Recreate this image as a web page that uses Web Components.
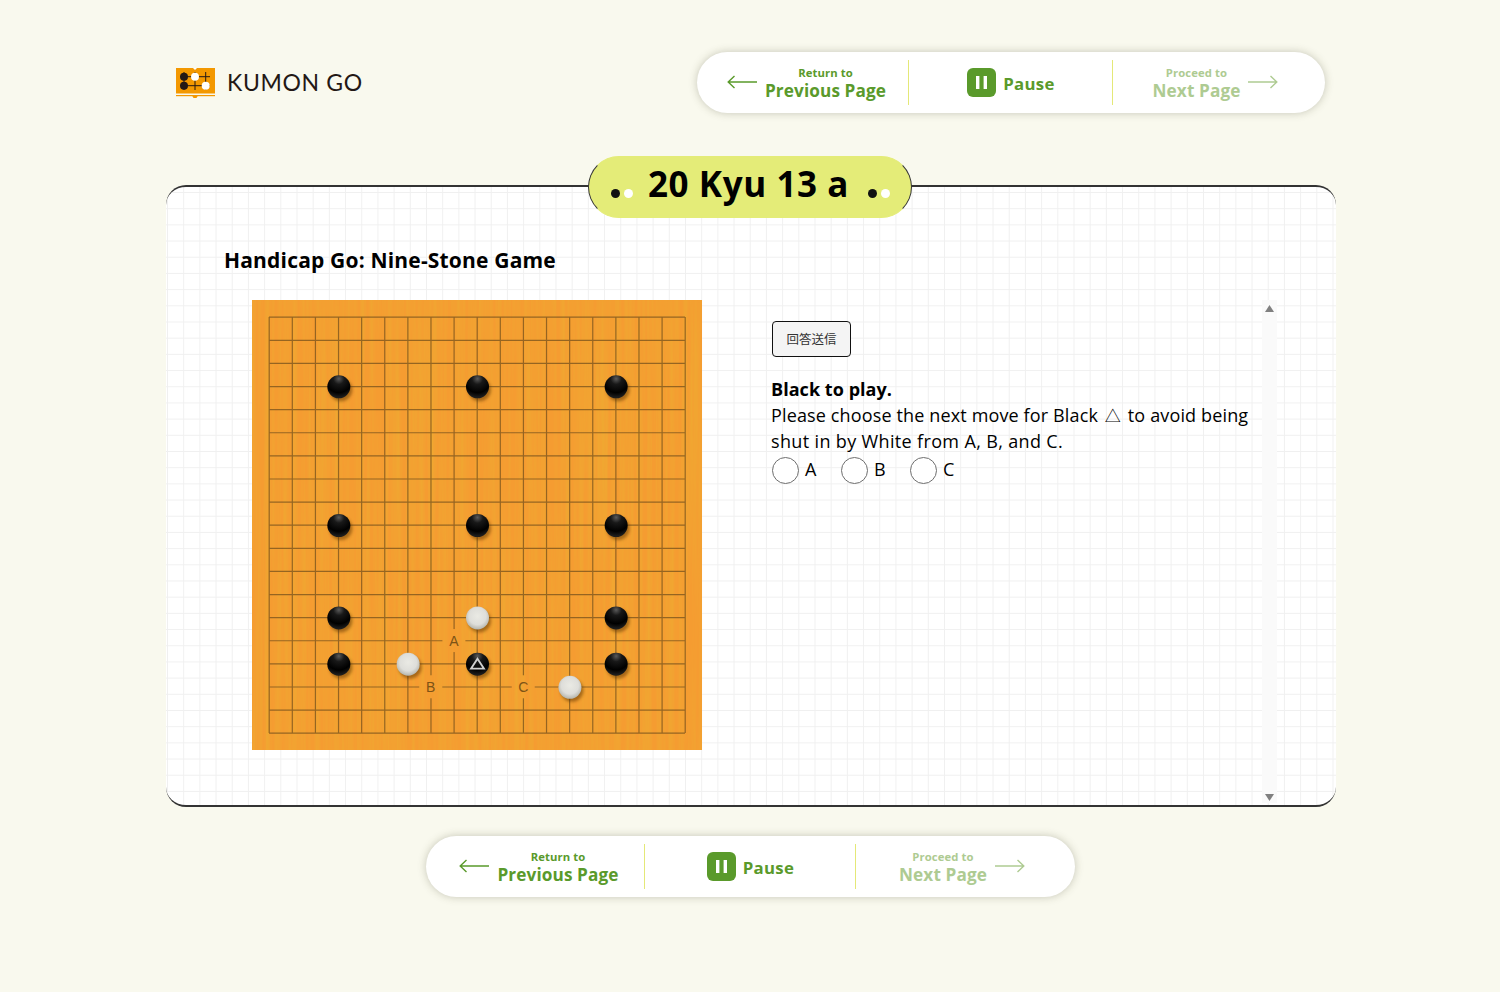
<!DOCTYPE html>
<html lang="en">
<head>
<meta charset="utf-8">
<title>KUMON GO</title>
<style>
    html, body { margin: 0; padding: 0; }
    body {
        background: #f9f9ee;
        font-family: "Open Sans", "Noto Sans CJK JP", sans-serif;
        color: #000;
    }
</style>
</head>
<body>
<kumon-page></kumon-page>

<script>
(function() {
    // nav-item: one section of the pill
    const navItemTpl = document.createElement('template');
    navItemTpl.innerHTML = `
        <style>
            :host {
                display: flex;
                align-items: center;
                justify-content: center;
                box-sizing: border-box;
                height: 100%;
                color: #5a9a2b;
                font-weight: 700;
            }
            :host([disabled]) { color: #aecb92; }
            :host([kind=prev]) { padding-left: 8px; }
            :host([kind=next]) { padding-right: 7px; }
            :host([kind=pause]) { padding-left: 1px; }
            .wrap { display: flex; align-items: center; gap: 8px; }
            :host([kind=pause]) .wrap { gap: 7px; }
            .labels { display: flex; flex-direction: column; align-items: center; margin-top: -1px; }
            .small { font-size: 11.300px; line-height: 14px; letter-spacing: .1px; margin-bottom: 1px; }
            .big { font-size: 17.200px; line-height: 20px; letter-spacing: .1px; margin-bottom: -2px; }
            svg { display: block; }
            .arrow { margin-top: -2px; }
            .pause { font-size: 16.800px; letter-spacing: .3px; margin-top: 2px; }
        </style>
        <div class="wrap"></div>
    `;
    const arrowLeft = `<svg class="arrow" width="30" height="14" viewBox="0 0 30 14" fill="none" stroke="currentColor" stroke-width="1.400"><path d="M30 7H1.500M7.500 1L1.200 7l6.300 6"/></svg>`;
    const arrowRight = `<svg class="arrow" width="30" height="14" viewBox="0 0 30 14" fill="none" stroke="currentColor" stroke-width="1.400"><path d="M0 7h28.500M22.500 1l6.300 6-6.300 6"/></svg>`;
    const pauseIcon = `<svg width="29" height="29" viewBox="0 0 29 29"><rect width="29" height="29" rx="6" fill="currentColor"/><rect x="9" y="8" width="3.400" height="13" fill="#fff"/><rect x="16.600" y="8" width="3.400" height="13" fill="#fff"/></svg>`;

    class NavItem extends HTMLElement {
        constructor() {
            super();
            this.attachShadow({mode: 'open'});
            this.shadowRoot.appendChild(navItemTpl.content.cloneNode(true));
        }

        connectedCallback() {
            const kind = this.getAttribute('kind');
            const wrap = this.shadowRoot.querySelector('.wrap');
            const labels = `<div class="labels"><span class="small">${this.getAttribute('small')}</span><span class="big">${this.getAttribute('big')}</span></div>`;
            if (kind === 'prev') {
                wrap.innerHTML = arrowLeft + labels;
            } else if (kind === 'next') {
                wrap.innerHTML = labels + arrowRight;
            } else {
                wrap.innerHTML = pauseIcon + '<span class="pause">Pause</span>';
            }
        }
    }
    customElements.define('nav-item', NavItem);

    // nav-pill: white rounded bar, column widths come from custom properties
    const navPillTpl = document.createElement('template');
    navPillTpl.innerHTML = `
        <style>
            :host {
                display: block;
                width: var(--pill-width);
                height: 61px;
                background: #fff;
                border-radius: 31px;
                box-shadow: 0 0 8px rgba(70, 70, 40, .28);
            }
            .row {
                display: grid;
                grid-template-columns: var(--c1) 1px var(--c2) 1px 1fr;
                align-items: center;
                height: 100%;
            }
            .sep { width: 1px; height: 45px; background: #e4e878; }
        </style>
        <div class="row">
            <slot name="prev"></slot>
            <div class="sep"></div>
            <slot name="pause"></slot>
            <div class="sep"></div>
            <slot name="next"></slot>
        </div>
    `;
    class NavPill extends HTMLElement {
        constructor() {
            super();
            this.attachShadow({mode: 'open'});
            this.shadowRoot.appendChild(navPillTpl.content.cloneNode(true));
        }
    }
    customElements.define('nav-pill', NavPill);

    // kumon-logo
    const logoTpl = document.createElement('template');
    logoTpl.innerHTML = `
        <style>
            :host { display: flex; align-items: center; gap: 12px; }
            span {
                font-family: "Lato", "Liberation Sans", sans-serif;
                font-size: 23px;
                font-weight: 400;
                letter-spacing: .65px;
                line-height: 30px;
                margin-top: -2px;
                color: #231815;
            }
            svg { display: block; }
        </style>
        <svg width="39" height="31" viewBox="0 0 39 31">
            <rect x="0" y="1" width="39" height="25.500" fill="#f39800"/>
            <path d="M17 1h4l-2 2z" fill="#fff"/>
            <rect x="0" y="28" width="39" height="1.200" fill="#f39800"/>
            <path d="M16 28.500h6l-1.500 2.500h-3z" fill="#f39800"/>
            <path d="M4 9.700h30M4 18.700h30M8 5v18M19 5v18M29.700 5v18" stroke="#231815" stroke-width="1" fill="none"/>
            <circle cx="8" cy="9.700" r="4" fill="#231815"/>
            <circle cx="8" cy="18.700" r="4" fill="#231815"/>
            <circle cx="19" cy="9.700" r="4" fill="#fff"/>
            <circle cx="29.700" cy="18.700" r="4" fill="#fff"/>
        </svg>
        <span>KUMON GO</span>
    `;
    class KumonLogo extends HTMLElement {
        constructor() {
            super();
            this.attachShadow({mode: 'open'});
            this.shadowRoot.appendChild(logoTpl.content.cloneNode(true));
        }
    }
    customElements.define('kumon-logo', KumonLogo);

    // level-badge: yellow pill that sits on the top border of the card
    const badgeTpl = document.createElement('template');
    badgeTpl.innerHTML = `
        <style>
            :host {
                display: flex;
                align-items: center;
                justify-content: space-between;
                box-sizing: border-box;
                width: 324px;
                height: 62px;
                padding: 0 21px 0 22px;
                background: #e4ec78;
                border: 1.500px solid #333;
                border-top-color: #e4ec78;
                border-bottom-color: #e4ec78;
                border-radius: 31px;
            }
            .title {
                font-size: 35px;
                font-weight: 700;
                line-height: 48px;
                margin: -6px 4px 0 0;
                letter-spacing: .6px;
                color: #000;
            }
            .dots { display: flex; gap: 4px; margin-top: 12px; }
            .dots i { display: block; width: 9px; height: 9px; border-radius: 50%; background: #111; }
            .dots i + i { background: #fff; }
        </style>
        <div class="dots"><i></i><i></i></div>
        <div class="title"><slot></slot></div>
        <div class="dots"><i></i><i></i></div>
    `;
    class LevelBadge extends HTMLElement {
        constructor() {
            super();
            this.attachShadow({mode: 'open'});
            this.shadowRoot.appendChild(badgeTpl.content.cloneNode(true));
        }
    }
    customElements.define('level-badge', LevelBadge);

    // go-board: draws the grid and stones in one svg
    const STEP = 416 / 18;
    const ORIGIN = 17;
    const at = n => ORIGIN + n * STEP;

    class GoBoard extends HTMLElement {
        constructor() {
            super();
            this.attachShadow({mode: 'open'});
        }

        get stones() { return JSON.parse(this.getAttribute('stones')); }
        get labels() { return JSON.parse(this.getAttribute('labels')); }

        connectedCallback() {
            let grid = '';
            for (let i = 0; i < 19; i++) {
                const p = at(i) + .2;
                grid += `M${p} ${ORIGIN}V${ORIGIN + 416}M${ORIGIN} ${p}H${ORIGIN + 416}`;
            }
            // label cells knock a hole in the grid, the wood shows through
            const holes = this.labels.map(([t, c, r]) =>
                `<rect x="${at(c) - 11.500}" y="${at(r) - 11.500}" width="23" height="23" fill="#000"/>`).join('');
            const letters = this.labels.map(([t, c, r]) =>
                `<text x="${at(c)}" y="${at(r) + 5}" text-anchor="middle">${t}</text>`).join('');
            const stones = this.stones.map(([color, c, r, mark]) => {
                const x = at(c) + .5, y = at(r) + .5;
                let out = `<circle cx="${x + 2}" cy="${y + 3}" r="11.500" fill="#5a3000" opacity=".5" filter="url(#soft)"/>`;
                out += `<circle cx="${x}" cy="${y}" r="11.500" fill="url(#${color})"/>`;
                if (mark) {
                    out += `<path d="M${x} ${y - 5.500}L${x + 6.500} ${y + 4.500}H${x - 6.500}Z" fill="none" stroke="#d0d0d0" stroke-width="1.800"/>`;
                }
                return out;
            }).join('');

            this.shadowRoot.innerHTML = `
                <style>
                    :host { display: block; width: 450px; height: 450px; flex: none; }
                    svg { display: block; }
                    text { font-family: "Liberation Sans", sans-serif; font-size: 14px; fill: #7d5316; }
                </style>
                <svg width="450" height="450" viewBox="0 0 450 450">
                    <defs>
                        <filter id="wood" x="0" y="0" width="100%" height="100%">
                            <feTurbulence type="fractalNoise" baseFrequency="0.22 0.004" numOctaves="3" seed="4"/>
                            <feColorMatrix values="0 0 0 0 .85  0 0 0 0 .42  0 0 0 0 .03  1.200 0 0 0 -.38"/>
                        </filter>
                        <filter id="soft"><feGaussianBlur stdDeviation="1.500"/></filter>
                        <mask id="holes" maskUnits="userSpaceOnUse" x="0" y="0" width="450" height="450">
                            <rect width="450" height="450" fill="#fff"/>
                            ${holes}
                        </mask>
                        <radialGradient id="black" cx=".5" cy=".15" r=".8">
                            <stop offset="0" stop-color="#5a5a5a"/>
                            <stop offset=".3" stop-color="#181818"/>
                            <stop offset=".75" stop-color="#000"/>
                            <stop offset="1" stop-color="#1c1c1c"/>
                        </radialGradient>
                        <radialGradient id="white" cx=".5" cy=".42" r=".62">
                            <stop offset="0" stop-color="#eaeae4"/>
                            <stop offset=".6" stop-color="#dededa"/>
                            <stop offset="1" stop-color="#adada4"/>
                        </radialGradient>
                    </defs>
                    <rect width="450" height="450" fill="#f59c31"/>
                    <rect width="450" height="450" filter="url(#wood)"/>
                    <path d="${grid}" fill="none" stroke="#704e1c" stroke-opacity=".72" stroke-width="1.200" mask="url(#holes)"/>
                    ${letters}${stones}
                </svg>
            `;
        }
    }
    customElements.define('go-board', GoBoard);

    // scroll-track: fake scrollbar beside the question text
    const trackTpl = document.createElement('template');
    trackTpl.innerHTML = `
        <style>
            :host {
                display: flex;
                flex-direction: column;
                justify-content: space-between;
                align-items: center;
                box-sizing: border-box;
                width: 15px;
                padding: 5px 0 2px;
                background: #fafafa;
                flex: none;
            }
            svg { display: block; }
        </style>
        <svg width="9" height="7" viewBox="0 0 9 7"><path d="M4.500 0L9 7H0z" fill="#808080"/></svg>
        <svg width="9" height="7" viewBox="0 0 9 7"><path d="M0 0h9L4.500 7z" fill="#808080"/></svg>
    `;
    class ScrollTrack extends HTMLElement {
        constructor() {
            super();
            this.attachShadow({mode: 'open'});
            this.shadowRoot.appendChild(trackTpl.content.cloneNode(true));
        }
    }
    customElements.define('scroll-track', ScrollTrack);

    // answer-choice: round radio with a letter
    const choiceTpl = document.createElement('template');
    choiceTpl.innerHTML = `
        <style>
            :host { display: inline-flex; align-items: center; gap: 6px; width: 69px; }
            input {
                appearance: none;
                box-sizing: border-box;
                width: 27px;
                height: 27px;
                margin: 0;
                border: 1px solid #6e6e6e;
                border-radius: 50%;
                background: #fff;
            }
            span { font-size: 18px; line-height: 24px; margin-top: -4px; }
        </style>
        <input type="radio" name="answer"><span><slot></slot></span>
    `;
    class AnswerChoice extends HTMLElement {
        constructor() {
            super();
            this.attachShadow({mode: 'open'});
            this.shadowRoot.appendChild(choiceTpl.content.cloneNode(true));
        }
    }
    customElements.define('answer-choice', AnswerChoice);

    // question-panel: submit button, prompt and choices
    const panelTpl = document.createElement('template');
    panelTpl.innerHTML = `
        <style>
            :host {
                display: block;
                flex: 1;
                min-width: 0;
                padding-top: 21px;
                font-size: 18px;
                line-height: 26px;
                letter-spacing: .14px;
            }
            button {
                display: block;
                box-sizing: border-box;
                width: 79px;
                height: 36px;
                margin-left: 1px;
                padding: 0 0 2px;
                border: 1px solid #111;
                border-radius: 4px;
                background: #f4f4f4;
                color: #333;
                font-family: "Noto Sans CJK JP", sans-serif;
                font-size: 12.500px;
            }
            p { margin: 19px 0 0; }
            b { font-weight: 700; letter-spacing: .05px; }
            .tri { font-family: "Noto Sans CJK JP", sans-serif; font-size: 16px; line-height: 1; margin: 0 2px; }
            .second { letter-spacing: .35px; }
            .choices { display: flex; margin-top: 3px; padding-left: 1px; }
        </style>
        <button>回答送信</button>
        <p><b>Black to play.</b><br>
        Please choose the next move for Black <span class="tri">△</span> to avoid being<br>
        <span class="second">shut in by White from A, B, and C.</span></p>
        <div class="choices">
            <answer-choice>A</answer-choice>
            <answer-choice>B</answer-choice>
            <answer-choice>C</answer-choice>
        </div>
    `;
    class QuestionPanel extends HTMLElement {
        constructor() {
            super();
            this.attachShadow({mode: 'open'});
            this.shadowRoot.appendChild(panelTpl.content.cloneNode(true));
        }
    }
    customElements.define('question-panel', QuestionPanel);

    // lesson-card: graph-paper panel, badge hangs over the top edge
    const cardTpl = document.createElement('template');
    cardTpl.innerHTML = `
        <style>
            :host {
                display: block;
                position: relative;
                box-sizing: border-box;
                height: 622px;
                padding: 58px 59px 0 58px;
                background-color: #fff;
                background-image:
                    linear-gradient(#f0f0f0 1px, transparent 1px),
                    linear-gradient(90deg, #f0f0f0 1px, transparent 1px);
                background-size: 16.200px 16.200px;
                background-position: 1px 5px;
                border-radius: 20px;
                border-top: 2px solid #333;
                border-bottom: 2px solid #333;
            }
            .badge { position: absolute; left: 422px; top: -31px; }
            h2 { margin: 0; font-size: 21px; line-height: 30px; font-weight: 700; letter-spacing: .18px; }
            .row { display: flex; margin: 25px 0 0 28px; height: 503px; }
            ::slotted(go-board) { margin-right: 69px; }
        </style>
        <div class="badge"><slot name="badge"></slot></div>
        <h2><slot name="title"></slot></h2>
        <div class="row">
            <slot name="board"></slot>
            <slot name="panel"></slot>
            <scroll-track></scroll-track>
        </div>
    `;
    class LessonCard extends HTMLElement {
        constructor() {
            super();
            this.attachShadow({mode: 'open'});
            this.shadowRoot.appendChild(cardTpl.content.cloneNode(true));
        }
    }
    customElements.define('lesson-card', LessonCard);

    // kumon-page: whole page layout
    const navContent = `
        <nav-item slot="prev" kind="prev" small="Return to" big="Previous Page"></nav-item>
        <nav-item slot="pause" kind="pause"></nav-item>
        <nav-item slot="next" kind="next" small="Proceed to" big="Next Page" disabled></nav-item>
    `;
    const pageTpl = document.createElement('template');
    pageTpl.innerHTML = `
        <style>
            :host { display: block; width: 1170px; margin-left: 166px; padding: 52px 0 95px; }
            header { display: flex; justify-content: space-between; align-items: center; padding: 0 11px 0 10px; margin-bottom: 72px; }
            .top { --pill-width: 628px; --c1: 211px; --c2: 203px; }
            .bottom { --pill-width: 649px; --c1: 218px; --c2: 210px; }
            footer { display: flex; justify-content: center; margin-top: 29px; padding-right: 1px; }
        </style>
        <header>
            <kumon-logo></kumon-logo>
            <nav-pill class="top">${navContent}</nav-pill>
        </header>
        <lesson-card>
            <level-badge slot="badge">20 Kyu 13 a</level-badge>
            <span slot="title">Handicap Go: Nine-Stone Game</span>
            <go-board slot="board"
                stones='[["black",3,3],["black",9,3],["black",15,3],["black",3,9],["black",9,9],["black",15,9],["black",3,13],["white",9,13],["black",15,13],["black",3,15],["white",6,15],["black",9,15,true],["black",15,15],["white",13,16]]'
                labels='[["A",8,14],["B",7,16],["C",11,16]]'></go-board>
            <question-panel slot="panel"></question-panel>
        </lesson-card>
        <footer>
            <nav-pill class="bottom">${navContent}</nav-pill>
        </footer>
    `;
    class KumonPage extends HTMLElement {
        constructor() {
            super();
            this.attachShadow({mode: 'open'});
            this.shadowRoot.appendChild(pageTpl.content.cloneNode(true));
        }
    }
    customElements.define('kumon-page', KumonPage);
})();
</script>
</body>
</html>
